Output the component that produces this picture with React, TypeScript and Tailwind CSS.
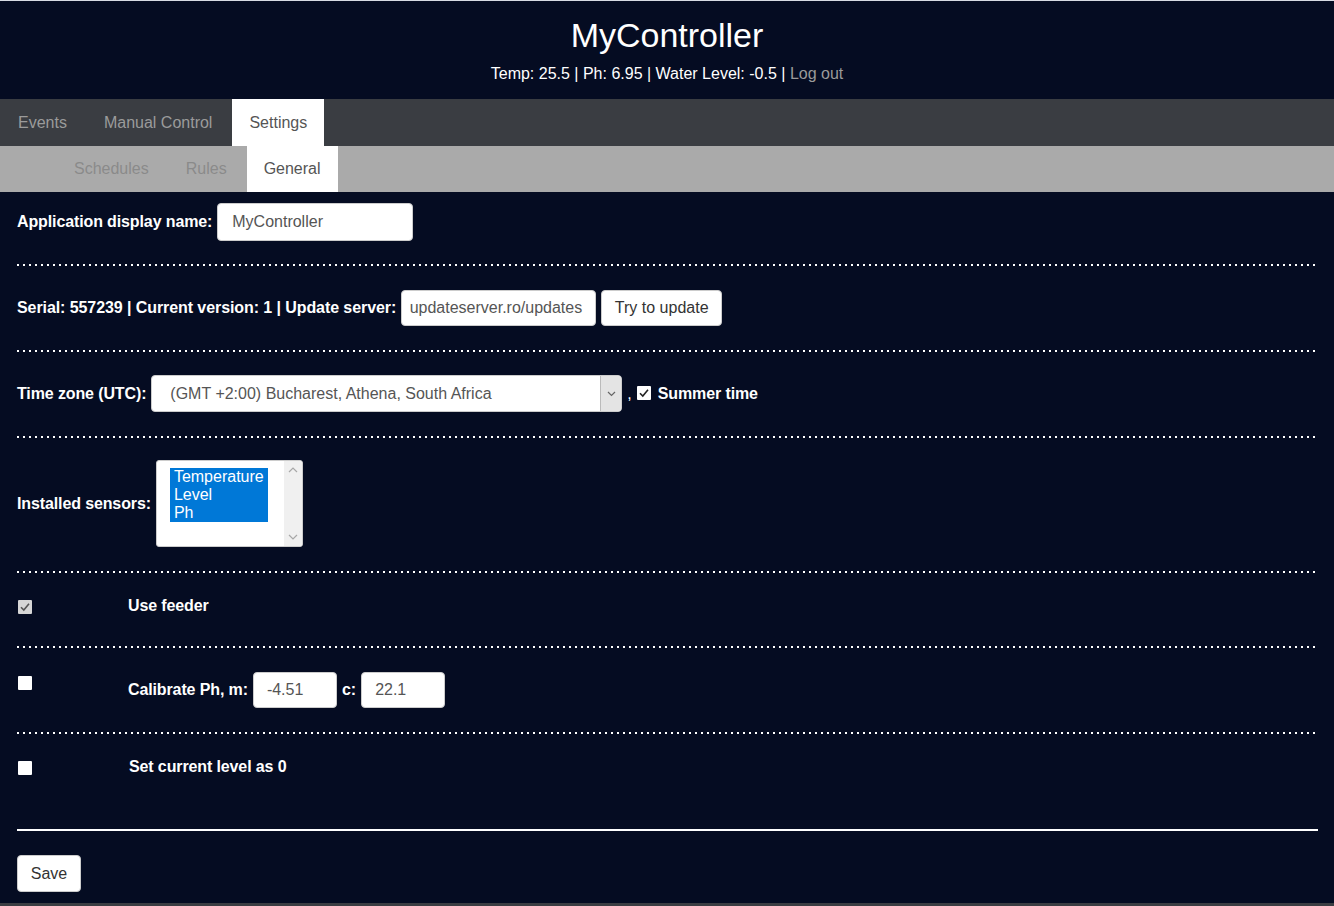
import React from 'react';

const font = { fontFamily: '"Liberation Sans", Arial, sans-serif' };

const Dotted = ({ mt }: { mt: string }) => (
  <div className={`${mt} h-[2px] w-full bg-[repeating-linear-gradient(90deg,#ffffff_0px,#ffffff_2px,transparent_2px,transparent_6px)]`} />
);

const Check = ({ checked, gray }: { checked?: boolean; gray?: boolean }) => (
  <span
    className={`flex h-[14px] w-[14px] shrink-0 items-center justify-center rounded-[1px] ${gray ? 'bg-[#d6d6d6]' : 'bg-white'}`}
  >
    {checked && (
      <svg width="12" height="12" viewBox="0 0 12 12" fill="none">
        <path d="M2 6.2 L4.8 9 L10 2.8" stroke={gray ? '#555' : '#222'} strokeWidth="1.6" />
      </svg>
    )}
  </span>
);

const TextBox = ({ value, w }: { value: string; w: string }) => (
  <div className={`${w} flex h-[36px] items-center overflow-hidden rounded-[4px] border border-[#ccc] bg-white px-[13px] text-[16px] text-[#555]`}>
    <span className="whitespace-nowrap">{value}</span>
  </div>
);

export default function App() {
  return (
    <div className="min-h-[906px] bg-[#050c22] text-white" style={font}>
      {/* header */}
      <div className="border-t border-[#d8dce4] pt-[14px] pb-[15px] text-center">
        <div className="h-[40px] text-[34px] leading-[40px]">MyController</div>
        <div className="mt-[9px] h-[20px] text-[16px] leading-[20px]">
          Temp: 25.5 | Ph: 6.95 | Water Level: -0.5 | <span className="text-[#9a9a9a]">Log out</span>
        </div>
      </div>

      {/* main tabs */}
      <div className="flex h-[47px] gap-[1px] bg-[#3a3d42] text-[16px]">
        <div className="flex items-center px-[18px] text-[#9b9b9b]">Events</div>
        <div className="flex items-center pl-[18px] pr-[19px] text-[#9b9b9b]">Manual Control</div>
        <div className="flex items-center bg-white px-[17px] text-[#555]">Settings</div>
      </div>

      {/* sub tabs */}
      <div className="flex h-[46px] gap-[1px] bg-[#aaaaaa] pl-[56px] text-[16px]">
        <div className="flex items-center px-[18px] text-[#8a8a8a]">Schedules</div>
        <div className="flex items-center px-[18px] text-[#8a8a8a]">Rules</div>
        <div className="ml-[1px] flex items-center bg-white px-[17px] text-[#555]">General</div>
      </div>

      {/* content */}
      <div className="px-[17px] pr-[16px] text-[16px] pb-[11px]">
        <div className="mt-[11px] flex h-[38px] items-center gap-[5px]">
          <span className="font-bold tracking-[-0.12px]">Application display name:</span>
          <div className="flex h-[38px] w-[196px] items-center rounded-[4px] border border-[#ccc] bg-white px-[14px] text-[#555]">
            MyController
          </div>
        </div>

        <Dotted mt="mt-[23px]" />

        <div className="mt-[24px] flex h-[36px] items-center gap-[5px]">
          <span className="font-bold tracking-[-0.08px]">Serial: 557239 | Current version: 1 | Update server:</span>
          <div className="flex h-[36px] w-[195px] items-center justify-end rounded-[4px] border border-[#ccc] bg-white pr-[13px] text-[#555]">
            <span className="whitespace-nowrap">updateserver.ro/updates</span>
          </div>
          <button className="flex h-[36px] w-[121px] items-center justify-center rounded-[4px] border border-[#ccc] bg-white text-[#333]">
            Try to update
          </button>
        </div>

        <Dotted mt="mt-[24px]" />

        <div className="mt-[23px] flex h-[37px] items-center">
          <span className="font-bold tracking-[-0.12px]">Time zone (UTC):</span>
          <div className="ml-[5px] flex h-[37px] w-[471px] items-stretch overflow-hidden rounded-[4px] border border-[#ccc] bg-white text-[#555]">
            <div className="flex flex-1 items-center pl-[18px] whitespace-nowrap">(GMT +2:00) Bucharest, Athena, South Africa</div>
            <div className="flex w-[21px] items-center justify-center border-l border-[#bbb] bg-[#e4e4e4]">
              <svg width="9" height="6" viewBox="0 0 9 6" fill="none">
                <path d="M1 1 L4.5 4.5 L8 1" stroke="#666" strokeWidth="1.2" />
              </svg>
            </div>
          </div>
          <span className="ml-[5px]">,</span>
          <span className="ml-[5px] -mt-[2px]">
            <Check checked />
          </span>
          <span className="ml-[7px] font-bold tracking-[-0.12px]">Summer time</span>
        </div>

        <Dotted mt="mt-[24px]" />

        <div className="mt-[22px] flex h-[87px] items-center">
          <span className="font-bold tracking-[-0.12px]">Installed sensors:</span>
          <div className="ml-[5px] flex h-[87px] w-[147px] overflow-hidden rounded-[3px] border border-[#ccc] bg-white">
            <div className="flex-1 pl-[13px] pt-[7px]">
              <div className="w-[98px] bg-[#0078d7] pl-[4px] text-[16px] leading-[18px] text-white">
                <div>Temperature</div>
                <div>Level</div>
                <div>Ph</div>
              </div>
            </div>
            <div className="flex w-[18px] flex-col items-center justify-between bg-[#f0f0f0] py-[6px]">
              <svg width="10" height="6" viewBox="0 0 10 6" fill="none">
                <path d="M1 5 L5 1 L9 5" stroke="#a8a8a8" strokeWidth="1.2" />
              </svg>
              <svg width="10" height="6" viewBox="0 0 10 6" fill="none">
                <path d="M1 1 L5 5 L9 1" stroke="#a8a8a8" strokeWidth="1.2" />
              </svg>
            </div>
          </div>
        </div>

        <Dotted mt="mt-[24px]" />

        <div className="mt-[24px] flex h-[26px] items-start">
          <div className="w-[111px] pt-[3px] pl-[1px]">
            <Check checked gray />
          </div>
          <span className="font-bold leading-[18px] tracking-[-0.12px]">Use feeder</span>
        </div>

        <Dotted mt="mt-[23px]" />

        <div className="mt-[24px] flex h-[36px] items-start">
          <div className="w-[111px] pt-[4px] pl-[1px]">
            <Check />
          </div>
          <div className="flex h-[36px] items-center gap-[5px]">
            <span className="font-bold tracking-[-0.12px]">Calibrate Ph, m:</span>
            <TextBox value="-4.51" w="w-[84px]" />
            <span className="font-bold">c:</span>
            <TextBox value="22.1" w="w-[84px]" />
          </div>
        </div>

        <Dotted mt="mt-[24px]" />

        <div className="mt-[24px] flex h-[18px] items-start">
          <div className="w-[112px] pt-[3px] pl-[1px]">
            <Check />
          </div>
          <span className="font-bold leading-[18px] tracking-[-0.12px]">Set current level as 0</span>
        </div>

        <div className="mt-[53px] h-[2px] w-full bg-white" />

        <button className="mt-[24px] flex h-[37px] w-[64px] items-center justify-center rounded-[4px] border border-[#ccc] bg-white text-[#333]">
          Save
        </button>
      </div>

      <div className="h-[3px] bg-[#3a3d42]" />
    </div>
  );
}
